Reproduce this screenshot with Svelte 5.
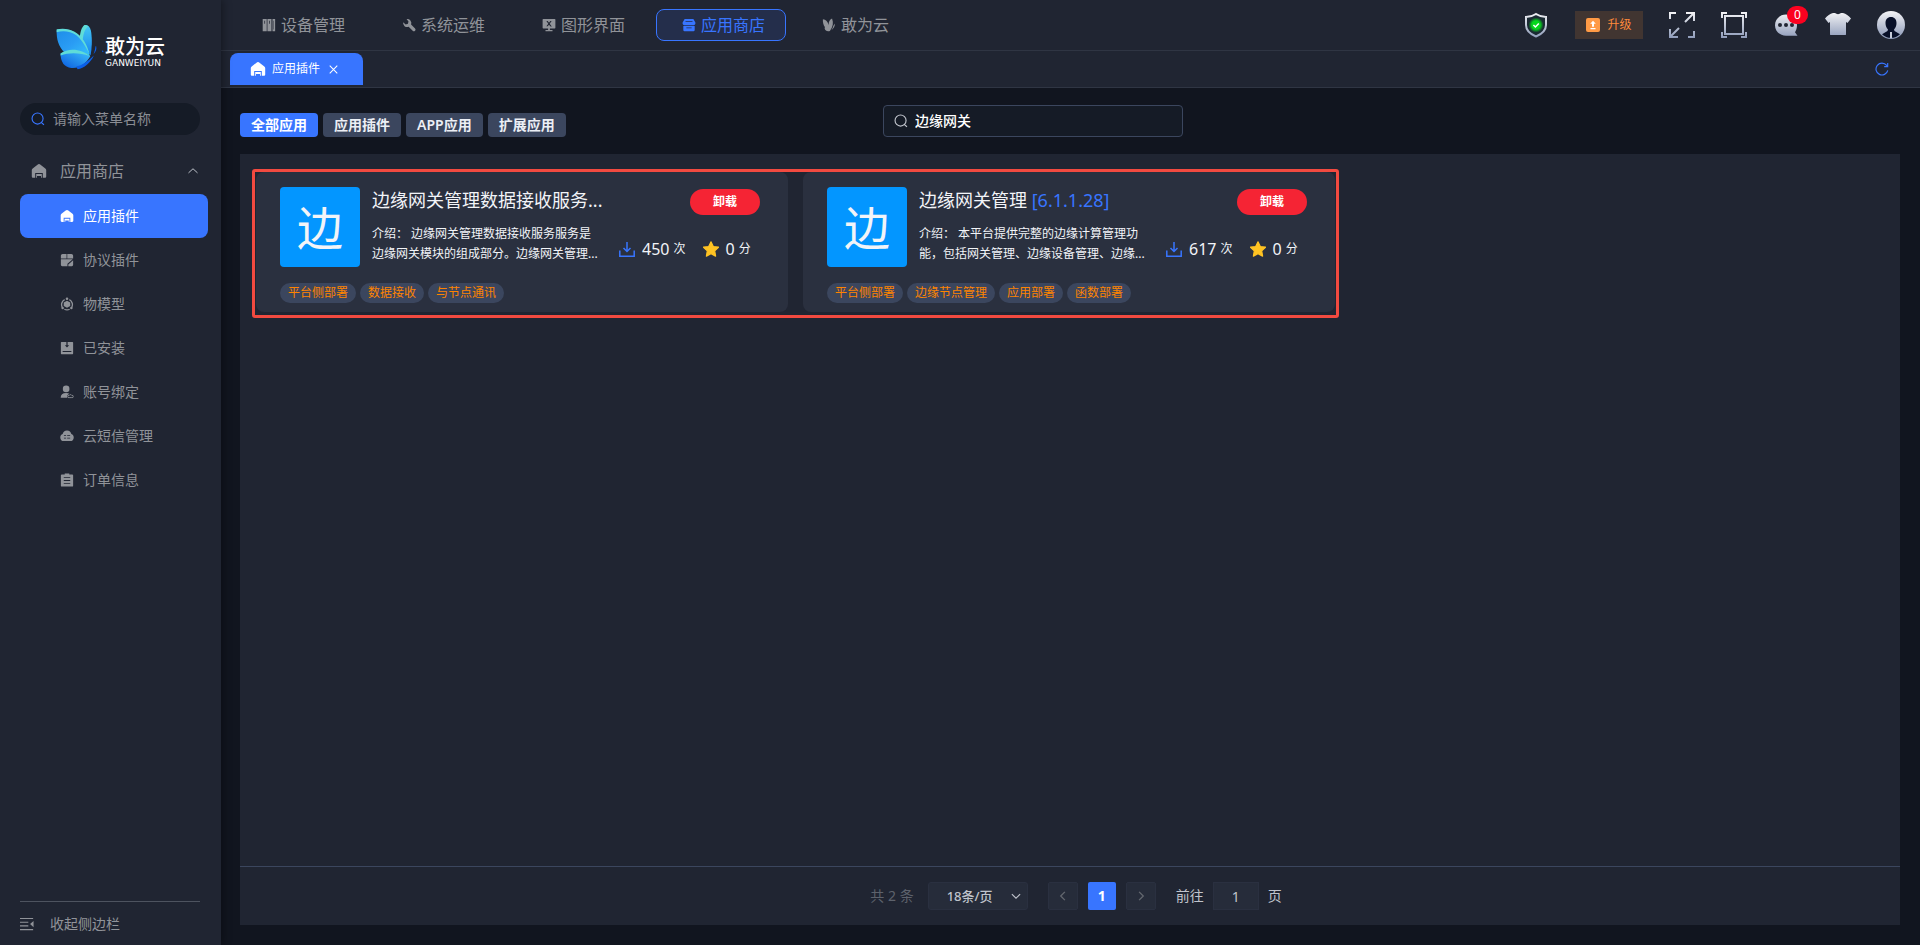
<script>
  const navItems = [
    { label: '设备管理', icon: 'device' },
    { label: '系统运维', icon: 'wrench' },
    { label: '图形界面', icon: 'screen' },
    { label: '应用商店', icon: 'shop', active: true },
    { label: '敢为云', icon: 'wings' }
  ];

  const menu = [
    { label: '应用插件', icon: 'home', active: true },
    { label: '协议插件', icon: 'protocol' },
    { label: '物模型', icon: 'model' },
    { label: '已安装', icon: 'installed' },
    { label: '账号绑定', icon: 'account' },
    { label: '云短信管理', icon: 'cloud' },
    { label: '订单信息', icon: 'order' }
  ];

  const filters = ['全部应用', '应用插件', 'APP应用', '扩展应用'];

  const apps = [
    {
      name: '边缘网关管理数据接收服务...',
      version: '',
      desc: '边缘网关管理数据接收服务服务是边缘网关模块的组成部分。边缘网关管理...',
      downloads: 450,
      score: 0,
      tags: ['平台侧部署', '数据接收', '与节点通讯']
    },
    {
      name: '边缘网关管理',
      version: '[6.1.1.28]',
      desc: '本平台提供完整的边缘计算管理功能，包括网关管理、边缘设备管理、边缘...',
      downloads: 617,
      score: 0,
      tags: ['平台侧部署', '边缘节点管理', '应用部署', '函数部署']
    }
  ];

  let current = $state('全部应用');
  let keyword = $state('边缘网关');
  let menuKeyword = $state('');
  let page = $state(1);
</script>

{#snippet icon(name)}
  <svg class="icon" viewBox="0 0 16 16" fill="currentColor" aria-hidden="true">
    {#if name === 'home'}
      <path fill-rule="evenodd" d="M8 1c.6 0 1 .3 1.500.7L14.300 5.400c.6.5.9 1 .9 1.700v6.400c0 .8-.6 1.300-1.300 1.300H2.100c-.7 0-1.300-.5-1.300-1.300V7.100c0-.7.300-1.200.900-1.700L6.500 1.700C7 1.300 7.400 1 8 1zM4.200 10v4.800h1V11h5.600v3.800h1V10zM6 13v1.800h4V13z" />
    {:else if name === 'device'}
      <path fill-rule="evenodd" d="M.8 1h4.600v14H.8zM6.200 1h4.600v14H6.200zM12 1h3v14h-3zM2.700 3v3.500h.8V3zM8.100 3v3.500h.8V3zM13.200 3v10h.5V3z" />
    {:else if name === 'wrench'}
      <path d="M5.200 1.200a4.600 4.600 0 0 1 5.200 6.100l4.500 4.600a1.900 1.900 0 0 1-2.700 2.700L7.600 10A4.600 4.600 0 0 1 1.300 4.900l2.900 2.400 2.600-.7.600-2.600z" />
    {:else if name === 'screen'}
      <path fill-rule="evenodd" d="M1.500 1h13c.5 0 .8.3.8.8v9.400c0 .5-.3.8-.8.800H9v1.600h3V15H4v-1.400h3V12H1.500c-.5 0-.8-.3-.8-.8V1.800c0-.5.3-.8.800-.8zM5 3.500l2.200 3L5 9.500h1.500L8 7.600l1.700 2h1.500L8.800 6.500l2.200-3H9.500L8 5.400 6.500 3.500z" />
    {:else if name === 'shop'}
      <path fill-rule="evenodd" d="M3 1h10l2.300 4v1.400c0 1-.8 1.800-1.800 1.800h-11C1.500 8.200.7 7.400.7 6.400V5zM4 3.800v.9h8v-.9zM1.500 9h13v4.800c0 .7-.5 1.200-1.200 1.200H2.700c-.7 0-1.200-.5-1.200-1.200zM5 10.800v.8h6v-.8z" />
    {:else if name === 'wings'}
      <path d="M1 1.500c3.500.4 5.700 2.800 6.500 6.500C7.600 4.500 8.700 2 11.500.6c1.800 4.900 1.200 9.400-2.500 14.200-3 .9-5.200-.3-6-2.900l.3-1.500C1.600 8 .8 5.200 1 1.500zM13 8.800l1.700-2.500c.2 3-1.300 5.700-4 7.600 1.200-1.700 1.900-3.300 2.300-5.100z" />
    {:else if name === 'protocol'}
      <path d="M3 1h4.500v5.200H1V3.500C1 2 1.800 1 3 1zM8.300 1H13c1.200 0 2 1 2 2.500v2.700H8.300zM1 7h13.500L8.500 12.300V15h-6C1.600 15 1 14.400 1 13.500zM15 8.300v5.200c0 .9-.6 1.500-1.500 1.500H9.500v-2z" />
    {:else if name === 'model'}
      <path d="M5.300 3A6.300 6.300 0 0 0 3 12.300M10.700 3A6.300 6.300 0 0 1 13 12.300M5 14a6.300 6.300 0 0 0 6 0" fill="none" stroke="currentColor" stroke-width="1.500" />
      <circle cx="8" cy="2" r="1.500" /><circle cx="3" cy="12.500" r="1.400" /><circle cx="13" cy="12.500" r="1.400" />
      <path d="M8 4.200l3.700 2v4.100L8 12.300l-3.700-2V6.200z" />
    {:else if name === 'installed'}
      <path fill-rule="evenodd" d="M1.700 1h5.600v3.800H5.500L8 7.300l2.500-2.500H8.700V1h5.600c.4 0 .7.300.7.700v12.600c0 .4-.3.700-.7.700H1.700c-.4 0-.7-.3-.7-.7V1.700c0-.4.300-.7.700-.7zM3 11.500v1.200h10v-1.200z" />
    {:else if name === 'account'}
      <circle cx="7" cy="4.500" r="3.800" />
      <path d="M.8 14.700c0-3.800 2-5.500 6.200-5.500 1.600 0 2.800.2 3.700.8-2.200.8-3 2.200-2.500 4.700z" />
      <path d="M10.500 11.900a1.300 1.300 0 1 0 0 2.500h3a1.300 1.300 0 1 0 0-2.500 1.700 1.700 0 0 0-3 0z" fill="none" stroke="currentColor" />
    {:else if name === 'cloud'}
      <path fill-rule="evenodd" d="M8 1.600c2.700 0 4.600 1.700 5 4.200 1.700.6 2.700 1.900 2.700 3.800 0 2.500-1.600 4.200-4 4.200H4.300c-2.400 0-4-1.700-4-4.200 0-1.900 1-3.200 2.700-3.800.4-2.500 2.300-4.200 5-4.200zM4.500 7.200v.9H7v-.9zM8.200 7.200v.9h3.400v-.9zM4.500 10v.9H7V10zM8.200 10v.9h3.400V10z" />
    {:else if name === 'order'}
      <path fill-rule="evenodd" d="M5.400.5h5.200v1.200H14c.6 0 1 .4 1 1V14.500c0 .6-.4 1-1 1H2c-.6 0-1-.4-1-1V2.700c0-.6.4-1 1-1h3.400zM4.300 4.800v1h7.400v-1zM4.300 8v1h7.400V8zM4.300 11.300v1h7.400v-1z" />
    {:else if name === 'search'}
      <path d="M7.500 1.200a6.300 6.300 0 1 1 0 12.600 6.300 6.300 0 0 1 0-12.600M12 12l2.800 2.800" fill="none" stroke="currentColor" stroke-width="1.300" />
    {:else if name === 'collapse'}
      <path d="M0 1h15v1.400H0zM0 5.300h9.500v1.400H0zM0 9.500h9.500v1.400H0zM0 13.800h15v1.400H0zM15.500 4.500v7.200L11.500 8z" />
    {:else if name === 'download'}
      <path d="M8 1v9.500M4.500 7L8 10.500 11.500 7M.8 9.500v5.700h14.400V9.500" fill="none" stroke="currentColor" stroke-width="1.500" />
    {:else if name === 'star'}
      <path d="M8 .8l2.300 4.700 5.200.7-3.800 3.700.9 5.200L8 12.600l-4.600 2.500.9-5.200L.5 6.200l5.200-.7z" stroke="currentColor" stroke-width="1.200" stroke-linejoin="round" />
    {:else if name === 'up'}
      <path d="M2 10.500L8 5l6 5.500" fill="none" stroke="currentColor" stroke-width="1.300" />
    {:else if name === 'down'}
      <path d="M2.500 5.500L8 11l5.500-5.500" fill="none" stroke="currentColor" stroke-width="1.500" />
    {:else if name === 'left'}
      <path d="M10.500 2.500L5 8l5.500 5.500" fill="none" stroke="currentColor" stroke-width="1.800" />
    {:else if name === 'right'}
      <path d="M5.500 2.500L11 8l-5.500 5.500" fill="none" stroke="currentColor" stroke-width="1.800" />
    {:else if name === 'close'}
      <path d="M2.500 2.500l11 11M13.500 2.500l-11 11" fill="none" stroke="currentColor" stroke-width="1.500" />
    {:else if name === 'refresh'}
      <path d="M14.600 9.500A6.800 6.800 0 1 1 13.300 3.800L14 5M14.500 1v4.300h-4" fill="none" stroke="currentColor" stroke-width="1.300" />
    {/if}
  </svg>
{/snippet}

<div class="layout">
  <aside class="sidebar">
    <a class="logo" href="#/">
      <svg viewBox="46 42 150 140" aria-hidden="true">
        <defs>
          <linearGradient id="wing" x1="0" y1="0" x2="1" y2="1">
            <stop offset="0" stop-color="#1d8ce8" />
            <stop offset=".5" stop-color="#2a9cf4" />
            <stop offset="1" stop-color="#35c3fb" />
          </linearGradient>
          <linearGradient id="wing-right" x1="0" y1="0" x2="0" y2="1">
            <stop offset="0" stop-color="#45c8f4" />
            <stop offset="1" stop-color="#1784f0" />
          </linearGradient>
          <linearGradient id="wing-low" x1="1" y1="0" x2="0" y2="1">
            <stop offset="0" stop-color="#3fc3fb" />
            <stop offset="1" stop-color="#0a5be0" />
          </linearGradient>
        </defs>
        <path fill="url(#wing-right)" d="M120 92c1-22 6-38 14-46 12-2 17 6 20 22 3 22 2 44-2 70z" />
        <path fill="#5fdcd8" d="M118 90c2-24 6-38 15-45 5-1 9 1 12 4-12 8-16 24-18 52z" />
        <path fill="url(#wing)" d="M48 60c32-8 60 2 80 30 10 15 17 33 22 50-22-18-52-12-78-12C54 112 47 88 48 60z" />
        <path fill="#5fdcd8" d="M48 58c34-6 64 4 84 36 8 14 13 26 17 42-14-30-32-62-60-69-14-4-27-4-41 0z" />
        <path fill="url(#wing-low)" d="M60 132c34-12 64-10 91 8-14 24-34 38-58 36-22-2-33-18-33-44z" />
        <path fill="#5fdcd8" d="M60 132c26-20 68-12 90 8-30-10-62-12-90-2z" />
        <path fill="#0b5fe8" d="M108 172c18-4 36-16 54-34-10 22-30 40-50 42zM169 110c2 9-1 17-8 24 3-8 5-15 6-24zM188 122l4 4-5 2z" />
      </svg>
      <span class="brand">
        <strong>敢为云</strong>
        <small>GANWEIYUN</small>
      </span>
    </a>

    <label class="menu-search">
      {@render icon('search')}
      <input type="text" placeholder="请输入菜单名称" aria-label="请输入菜单名称" bind:value={menuKeyword} />
    </label>

    <button class="group" type="button">
      {@render icon('home')}
      <span>应用商店</span>
      {@render icon('up')}
    </button>
    <nav class="menu">
      {#each menu as item}
        <a href="#/" class:active={item.active}>
          {@render icon(item.icon)}
          {item.label}
        </a>
      {/each}
    </nav>

    <button class="collapse" type="button">
      {@render icon('collapse')}
      收起侧边栏
    </button>
  </aside>

  <div class="main">
    <header class="header">
      <nav class="nav">
        {#each navItems as item}
          <a href="#/" class:active={item.active}>
            {@render icon(item.icon)}
            {item.label}
          </a>
        {/each}
      </nav>
      <div class="tools">
        <button type="button" aria-label="安全">
          <svg viewBox="0 0 26 26" aria-hidden="true">
            <defs>
              <linearGradient id="silver" gradientUnits="userSpaceOnUse" x1="0" y1="0" x2="0" y2="26">
                <stop offset="0" stop-color="#f4f4f6" />
                <stop offset="1" stop-color="#8f9cba" />
              </linearGradient>
              <radialGradient id="glow">
                <stop offset=".55" stop-color="#05d81c" />
                <stop offset="1" stop-color="#05d81c" stop-opacity="0" />
              </radialGradient>
            </defs>
            <path d="M13 2c3 2 6 3 10 3v8c0 5-4 9-10 11.500C7 22 3 18 3 13V5c4 0 7-1 10-3z" fill="#1b2a33" stroke="url(#silver)" stroke-width="2" />
            <circle cx="13" cy="13" r="7.500" fill="url(#glow)" />
            <path d="M10.400 13l2 2 3.400-3.600" fill="none" stroke="#fff" stroke-width="1.500" />
          </svg>
        </button>
        <button class="upgrade" type="button">
          <svg viewBox="0 0 14 14" aria-hidden="true">
            <rect width="14" height="14" rx="2" fill="#ff9a45" />
            <path d="M7 2.800l2.800 3H8v3H6v-3H4.200zM4.500 10h5v1.200h-5z" fill="#fff" />
          </svg>
          升级
        </button>
        <button type="button" aria-label="全屏">
          <svg viewBox="0 0 26 26" fill="none" stroke="url(#silver)" stroke-width="2" aria-hidden="true">
            <path d="M1 7V1h6M19 25h6v-6M17 1h8v8M25 1l-9 9M9 25H1v-8M1 25l9-9" />
          </svg>
        </button>
        <button type="button" aria-label="适应窗口">
          <svg viewBox="0 0 26 26" fill="none" stroke="url(#silver)" stroke-width="2" aria-hidden="true">
            <path d="M4 4h18v18H4zM1 6V1h5M20 1h5v5M25 20v5h-5M6 25H1v-5" />
          </svg>
        </button>
        <button class="message" type="button" aria-label="消息">
          <svg viewBox="0 0 26 26" aria-hidden="true">
            <path d="M13 2.500c6.200 0 11 4.700 11 10.700 0 3-.9 5.300-2 7l2.500 3.600H13c-6.200 0-11-4.500-11-10.600S6.800 2.500 13 2.500z" fill="url(#silver)" />
            <g fill="#202532"><circle cx="7" cy="13" r="2" /><circle cx="13" cy="13" r="2" /><circle cx="19" cy="13" r="2" /></g>
          </svg>
          <span class="badge">0</span>
        </button>
        <button type="button" aria-label="主题">
          <svg viewBox="0 0 26 26" aria-hidden="true">
            <path d="M8 1h2c1.500 1.500 4.500 1.500 6 0h2c3 1 5.500 2.500 8 5.500L22.500 11l-1.500-1v12.500c0 .3-.2.500-.5.500h-15c-.3 0-.5-.2-.5-.5V10l-1.500 1L0 6.500C2.500 3.500 5 2 8 1z" fill="url(#silver)" />
          </svg>
        </button>
        <button class="avatar" type="button" aria-label="用户">
          <svg viewBox="0 0 28 28" aria-hidden="true">
            <circle cx="14" cy="14" r="14" fill="url(#silver)" />
            <path d="M14 6c3.500 0 5.500 2.500 5.500 6 0 3-1 5-2.500 6.500l.5 1.500 5.500 3.200a12.900 12.900 0 0 1-18 0L10.500 20l.5-1.500C9.500 17 8.500 15 8.500 12c0-3.500 2-6 5.500-6z" fill="#081029" />
            <path d="M13 21h2v6h-2z" fill="#c6cbd9" />
          </svg>
        </button>
      </div>
    </header>

    <div class="tabs">
      <div class="tab">
        {@render icon('home')}
        <span>应用插件</span>
        <button type="button" aria-label="关闭">{@render icon('close')}</button>
      </div>
      <button class="refresh" type="button" aria-label="刷新">{@render icon('refresh')}</button>
    </div>

    <div class="toolbar">
      <div class="filters">
        {#each filters as filter}
          <button type="button" class:active={current === filter} onclick={() => (current = filter)}>{filter}</button>
        {/each}
      </div>
      <label class="search">
        {@render icon('search')}
        <input type="text" aria-label="搜索应用" bind:value={keyword} />
      </label>
    </div>

    <main class="panel">
      <div class="grid">
        <div class="marked">
          {#each apps as app}
            <article class="card">
              <div class="row">
                <div class="thumb">边</div>
                <div class="info">
                  <h3>{app.name} {#if app.version}<span>{app.version}</span>{/if}</h3>
                  <p>介绍： {app.desc}</p>
                </div>
                <div class="side">
                  <button class="uninstall" type="button">卸载</button>
                  <div class="stats">
                    <span class="count">{@render icon('download')}<b>{app.downloads}</b>次</span>
                    <span class="score">{@render icon('star')}<b>{app.score}</b>分</span>
                  </div>
                </div>
              </div>
              <div class="tags">
                {#each app.tags as tag}
                  <span>{tag}</span>
                {/each}
              </div>
            </article>
          {/each}
        </div>
      </div>

      <footer class="pagination">
        <span class="total">共 2 条</span>
        <div class="size">
          <select aria-label="每页条数">
            <option>18条/页</option>
          </select>
          {@render icon('down')}
        </div>
        <div class="pager">
          <button type="button" aria-label="上一页" disabled>{@render icon('left')}</button>
          <button class="current" type="button">1</button>
          <button type="button" aria-label="下一页" disabled>{@render icon('right')}</button>
        </div>
        <label class="jump">
          前往
          <input type="text" bind:value={page} />
          页
        </label>
      </footer>
    </main>
  </div>
</div>

<style>
  :global(body) {
    margin: 0;
    background: #11151f;
  }

  .layout {
    display: flex;
    min-height: 100vh;
    font-family: 'Noto Sans', 'Noto Sans CJK SC', sans-serif;
    font-size: 14px;
    line-height: 20px;
    color: #fff;
  }

  .layout :global(*) {
    box-sizing: border-box;
  }

  button,
  input,
  select {
    margin: 0;
    padding: 0;
    border: 0;
    background: none;
    color: inherit;
    font: inherit;
    outline: none;
  }

  button {
    cursor: pointer;
  }

  a {
    color: inherit;
    text-decoration: none;
  }

  svg {
    display: block;
    flex: none;
  }

  .icon {
    width: 14px;
    height: 14px;
  }

  /* sidebar */
  .sidebar {
    display: flex;
    flex-direction: column;
    flex: none;
    width: 221px;
    background: #202532;
    box-shadow: 2px 0 8px rgba(0, 0, 0, 0.35);
    color: #909399;
    z-index: 1;
  }

  .logo {
    display: flex;
    padding: 24px 0 0 56px;
    height: 103px;
  }

  .logo svg {
    width: 49px;
    height: 46px;
  }

  .brand {
    display: flex;
    flex-direction: column;
    padding-top: 11px;
    color: #fff;
  }

  .brand strong {
    font-size: 20px;
    font-weight: 500;
    line-height: 24px;
  }

  .brand small {
    font: 9px/8px 'DejaVu Sans', sans-serif;
  }

  .menu-search {
    display: flex;
    align-items: center;
    gap: 8px;
    margin: 0 21px 14px 20px;
    padding-left: 11px;
    height: 32px;
    border-radius: 16px;
    background: #151b26;
  }

  .menu-search .icon {
    color: #3875ff;
  }

  .menu-search input {
    flex: 1;
    min-width: 0;
  }

  .menu-search input::placeholder {
    color: #8a8d94;
    opacity: 1;
  }

  .group {
    display: flex;
    align-items: center;
    gap: 13px;
    padding: 0 22px 0 31px;
    height: 43px;
    font-size: 16px;
    text-align: left;
  }

  .group span {
    flex: 1;
  }

  .group .icon:first-child {
    width: 16px;
    height: 16px;
  }

  .group .icon:last-child {
    width: 12px;
    color: #c0c4cc;
  }

  .menu {
    flex: 1;
    padding: 2px 13px 0 20px;
  }

  .menu a {
    display: flex;
    align-items: center;
    gap: 9px;
    padding-left: 40px;
    height: 44px;
    border-radius: 8px;
  }

  .menu a.active {
    background: #3875ff;
    color: #fff;
  }

  .collapse {
    display: flex;
    align-items: center;
    gap: 16px;
    margin: 0 21px 0 20px;
    height: 44px;
    border-top: 1px solid #4d535f;
  }

  /* header */
  .main {
    display: flex;
    flex-direction: column;
    flex: 1;
    min-width: 0;
  }

  .header {
    display: flex;
    justify-content: space-between;
    align-items: center;
    padding: 0 15px;
    height: 51px;
    border-bottom: 1px solid #2f3543;
    background: #202532;
  }

  .nav {
    display: flex;
    gap: 10px;
    color: #909399;
  }

  .nav a {
    display: flex;
    align-items: center;
    gap: 4px;
    padding: 0 20px 0 24px;
    height: 32px;
    border: 1px solid transparent;
    border-radius: 8px;
    font-size: 16px;
  }

  .nav .icon {
    width: 16px;
  }

  .nav a.active {
    border-color: #3875ff;
    background: #242e4b;
    color: #3875ff;
  }

  .tools {
    display: flex;
    align-items: center;
    gap: 26px;
  }

  .tools svg {
    width: 26px;
    height: 26px;
  }

  .tools .upgrade {
    display: flex;
    align-items: center;
    justify-content: center;
    gap: 7px;
    width: 68px;
    height: 28px;
    background: #413531;
    color: #ff8a3c;
    font-size: 12px;
  }

  .tools .upgrade svg {
    width: 14px;
    height: 14px;
  }

  .tools .avatar svg {
    width: 28px;
    height: 28px;
  }

  .message {
    position: relative;
  }

  .badge {
    position: absolute;
    top: -6px;
    right: -9px;
    width: 21px;
    border-radius: 9px;
    background: #fb0220;
    color: #fff;
    font-size: 12px;
    line-height: 18px;
  }

  .tabs {
    display: flex;
    justify-content: space-between;
    align-items: center;
    padding: 0 31px 0 9px;
    height: 37px;
    border-bottom: 1px solid #2f3543;
    background: #202532;
  }

  .tab {
    display: flex;
    align-items: center;
    gap: 6px;
    padding: 0 24px 0 20px;
    height: 32px;
    border-radius: 8px 8px 0 0;
    background: #3875ff;
    font-size: 12px;
  }

  .tab .icon {
    width: 16px;
    height: 16px;
  }

  .tab button {
    padding-left: 2px;
  }

  .tab button .icon {
    width: 11px;
    height: 11px;
  }

  .refresh {
    color: #3875ff;
  }

  /* content */
  .toolbar {
    display: grid;
    grid-template-columns: 1fr 300px 1fr;
    align-items: end;
    margin: 17px 0 17px 19px;
    padding-right: 94px;
  }

  .filters {
    display: flex;
    gap: 5px;
  }

  .filters button {
    padding: 0 11px;
    height: 24px;
    border-radius: 4px;
    background: #3b465e;
    color: #eceff5;
    font-weight: 600;
  }

  .filters button.active {
    background: #3875ff;
    color: #fff;
  }

  .search {
    display: flex;
    align-items: center;
    gap: 7px;
    padding: 0 10px;
    height: 32px;
    border: 1px solid #3b465e;
    border-radius: 4px;
    background: #151b26;
    font-weight: 500;
  }

  .search .icon {
    color: #c0c4cc;
  }

  .search input {
    flex: 1;
    min-width: 0;
  }

  .panel {
    display: flex;
    flex: 1;
    flex-direction: column;
    margin: 0 20px 20px 19px;
    background: #202532;
  }

  .grid {
    display: grid;
    flex: 1;
    grid-template-columns: repeat(3, 1fr);
    align-content: start;
    gap: 15px;
    padding: 18px 18px 18px 16px;
  }

  .marked {
    position: relative;
    display: grid;
    grid-column: span 2;
    grid-template-columns: 1fr 1fr;
    gap: 15px;
  }

  .marked::after {
    position: absolute;
    inset: -3px -4px -6px;
    border: 3px solid #f24a40;
    border-radius: 3px;
    content: '';
    pointer-events: none;
  }

  .card {
    padding: 15px 28px 9px 24px;
    border-radius: 8px;
    background: #2a303f;
    color: #f2f4f8;
    font-size: 12px;
  }

  .row {
    display: flex;
  }

  .thumb {
    flex: none;
    width: 80px;
    height: 80px;
    border-radius: 4px;
    background: #0396ff;
    font-size: 46px;
    line-height: 80px;
    text-align: center;
  }

  .info {
    flex: 1;
    min-width: 0;
    padding-left: 12px;
  }

  h3 {
    margin: 0 0 11px;
    font-size: 18px;
    font-weight: 400;
    line-height: 26px;
    white-space: nowrap;
  }

  h3 span {
    color: #3875ff;
  }

  .info p {
    margin: 0;
    max-width: 228px;
  }

  .side {
    display: flex;
    flex-direction: column;
    width: 141px;
    padding-top: 2px;
  }

  .uninstall {
    align-self: flex-end;
    width: 70px;
    height: 26px;
    border-radius: 13px;
    background: #f52434;
    color: #fff;
    font-weight: 600;
  }

  .stats {
    display: flex;
    gap: 18px;
    margin-top: 22px;
    line-height: 24px;
  }

  .stats span {
    display: flex;
    align-items: center;
    gap: 4px;
  }

  .stats b {
    padding-left: 3px;
    font-size: 16px;
    font-weight: 400;
  }

  .stats .icon {
    width: 16px;
    height: 16px;
  }

  .count .icon {
    color: #3875ff;
  }

  .score .icon {
    color: #ffc323;
  }

  .score b {
    padding-left: 2px;
  }

  .tags {
    display: flex;
    gap: 4px;
    margin-top: 16px;
  }

  .tags span {
    padding: 0 8px;
    border-radius: 10px;
    background: #3b465e;
    color: #ff8400;
  }

  .pagination {
    display: flex;
    justify-content: center;
    align-items: center;
    padding-left: 12px;
    height: 59px;
    border-top: 1px solid #3b465e;
    color: #c0c4cc;
  }

  .total {
    color: #5d626c;
  }

  .size {
    position: relative;
    margin: 0 20px 0 14px;
    font-size: 13px;
    font-weight: 500;
  }

  .size select {
    width: 100px;
    height: 28px;
    padding-left: 18px;
    border: 1px solid #2a3040;
    border-radius: 3px;
    background: #262c3a;
    appearance: none;
  }

  .size .icon {
    position: absolute;
    top: 8px;
    right: 6px;
    width: 12px;
    height: 12px;
    pointer-events: none;
  }

  .pager {
    display: flex;
    gap: 10px;
  }

  .pager button {
    display: flex;
    align-items: center;
    justify-content: center;
    width: 30px;
    height: 28px;
    border: 1px solid #2a3040;
    border-radius: 2px;
    background: #262c3a;
    color: #63676f;
  }

  .pager .icon {
    width: 12px;
    height: 12px;
  }

  .pager button.current {
    width: 28px;
    border: 0;
    background: #3875ff;
    color: #fff;
    font-weight: 700;
  }

  .jump {
    display: flex;
    align-items: center;
    gap: 9px;
    margin-left: 20px;
  }

  .jump input {
    width: 46px;
    height: 28px;
    border: 1px solid #2a3040;
    background: #262c3a;
    text-align: center;
  }
</style>
